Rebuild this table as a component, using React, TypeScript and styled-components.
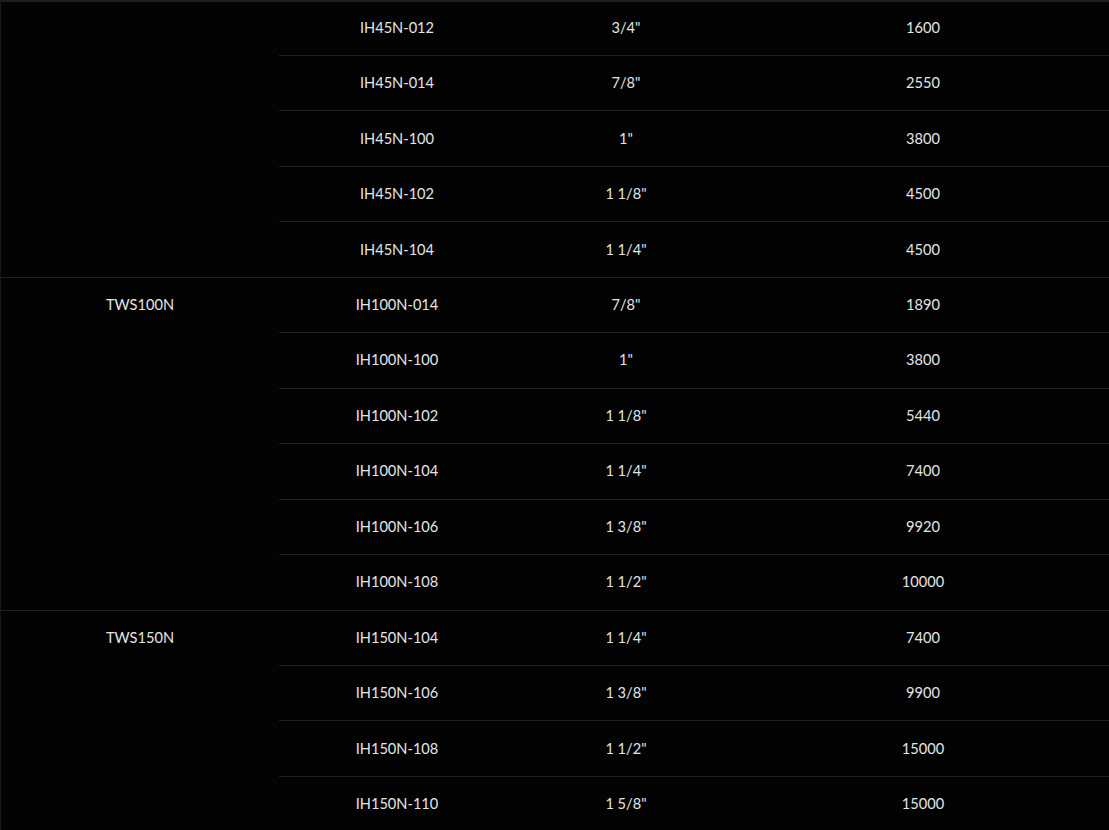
import React from "react";
import styled, { createGlobalStyle } from "styled-components";

const Global = createGlobalStyle`
  html, body { margin: 0; padding: 0; background: #030303; }
  body { font-family: "Lato", "Liberation Sans", sans-serif; }
`;

const Frame = styled.div`
  width: 1109px;
  height: 830px;
  box-sizing: border-box;
  background: #030303;
  border-top: 2px solid #1b1e23;
  border-left: 1px solid #15181c;
  overflow: hidden;
`;

const Table = styled.div`
  margin-top: -1.46px;
  display: flex;
  flex-direction: column;
`;

const Group = styled.div`
  display: grid;
  grid-template-columns: 278px 1fr;
`;

const Model = styled.div`
  color: #e2e4e6;
  font-size: 14.6px;
  text-align: center;
  padding-top: 18px;
  border-bottom: 1px solid #212121;
`;

const Rows = styled.div`
  display: flex;
  flex-direction: column;
`;

const Row = styled.div`
  display: grid;
  grid-template-columns: 236px 222px 1fr;
  align-items: center;
  height: 55.46px;
  box-sizing: border-box;
  padding-bottom: 1px;
  border-bottom: 1px solid #212121;
`;

const Cell = styled.div`
  color: #e2e4e6;
  font-size: 14.6px;
  text-align: center;
`;

type Item = [string, string, string];

const groups: { model: string; items: Item[] }[] = [
  {
    model: "",
    items: [
      ["IH45N-012", "3/4\"", "1600"],
      ["IH45N-014", "7/8\"", "2550"],
      ["IH45N-100", "1\"", "3800"],
      ["IH45N-102", "1 1/8\"", "4500"],
      ["IH45N-104", "1 1/4\"", "4500"],
    ],
  },
  {
    model: "TWS100N",
    items: [
      ["IH100N-014", "7/8\"", "1890"],
      ["IH100N-100", "1\"", "3800"],
      ["IH100N-102", "1 1/8\"", "5440"],
      ["IH100N-104", "1 1/4\"", "7400"],
      ["IH100N-106", "1 3/8\"", "9920"],
      ["IH100N-108", "1 1/2\"", "10000"],
    ],
  },
  {
    model: "TWS150N",
    items: [
      ["IH150N-104", "1 1/4\"", "7400"],
      ["IH150N-106", "1 3/8\"", "9900"],
      ["IH150N-108", "1 1/2\"", "15000"],
      ["IH150N-110", "1 5/8\"", "15000"],
    ],
  },
];

export default function App() {
  return (
    <>
      <Global />
      <Frame>
        <Table>
          {groups.map((g, gi) => (
            <Group key={gi}>
              <Model>{g.model}</Model>
              <Rows>
                {g.items.map((it) => (
                  <Row key={it[0]}>
                    <Cell>{it[0]}</Cell>
                    <Cell>{it[1]}</Cell>
                    <Cell>{it[2]}</Cell>
                  </Row>
                ))}
              </Rows>
            </Group>
          ))}
        </Table>
      </Frame>
    </>
  );
}
